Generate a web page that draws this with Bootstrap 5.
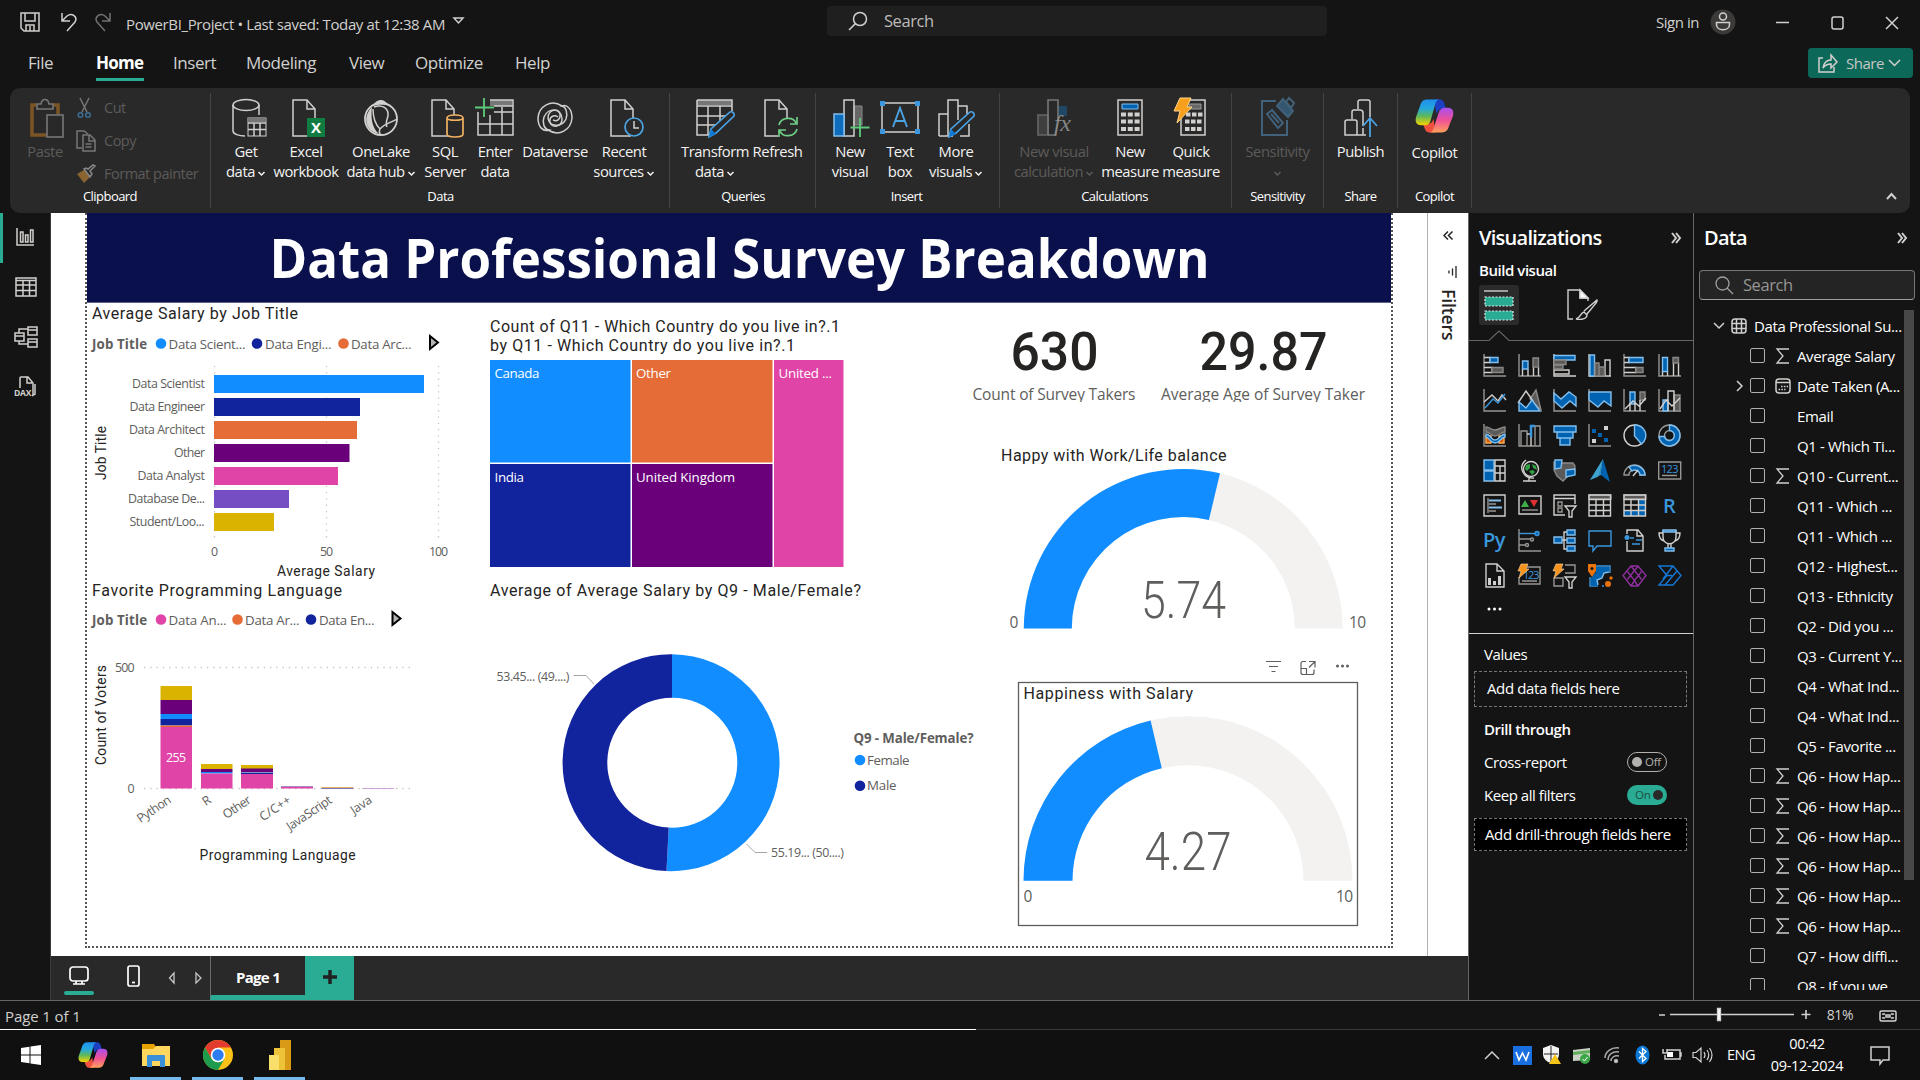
<!DOCTYPE html>
<html lang="en">
<head>
<meta charset="utf-8">
<meta name="viewport" content="width=device-width, initial-scale=1">
<title>PowerBI_Project</title>
<link href="https://cdn.jsdelivr.net/npm/bootstrap@5.3.0/dist/css/bootstrap.min.css" rel="stylesheet">
<script src="https://cdn.jsdelivr.net/npm/bootstrap@5.3.0/dist/js/bootstrap.bundle.min.js"></script>
<style>
:root{--ink:#141414;--panel:#292929;--teal:#2aac94;--ui:"Open Sans","Noto Sans",sans-serif}
body{width:1920px;height:1080px;overflow:hidden;background:var(--ink);color:#fff;font-family:var(--ui);font-size:15px;line-height:20px;letter-spacing:-.45px}
svg{display:block;flex:none;overflow:visible}
.i-line{fill:none;stroke:#d2d0ce;stroke-width:1.5}
/* title bar */
.titlebar{height:44px;color:#d2d0ce}
.tb-left{width:827px;padding-left:20px}
.tb-name{margin-left:14px;padding-top:3px;font-size:15px;letter-spacing:-.38px}
.tb-search{width:500px;height:30px;margin-top:-2px;background:#1f1f1f;border-radius:4px;padding-left:21px;font-size:16.5px;color:#bdbbb9;line-height:22px}
.tb-right{padding-right:21px;margin-top:-1px}
.tb-avatar{margin:0 27px 0 7px}
/* menu */
.menubar{height:44px;padding-left:28px;padding-right:7px;font-size:17px;color:#d2d0ce}
.menubar .tabs span{display:block;height:37px;padding-top:9px}
.menubar .tabs .on{color:#fff;font-weight:700;border-bottom:3px solid var(--teal);letter-spacing:-.75px}
.m-a{width:68px}.m-b{width:48px;margin-right:29px}.m-c{width:73px}.m-d{width:103px}.m-e{width:66px}.m-f{width:100px}
.btn-share{width:105px;height:30px;background:#0c695a;border-radius:4px;color:#c8c6c4;font-size:15px;padding:0 0 0 9px;letter-spacing:-.5px}
.btn-share:hover{background:#0c695a;color:#c8c6c4}
/* ribbon */
.ribbon{height:125px;margin:0 10px;background:var(--panel);border-radius:10px;padding:5px 0}
.rgroup{border-right:1px solid #454545;height:115px}
.rgroup .rcap{font-size:13px;letter-spacing:-.55px;height:22px;line-height:22px;text-align:center;white-space:nowrap}
.rbtn{display:flex;flex-direction:column;align-items:center;height:92px;padding-top:5px;white-space:nowrap;flex:none;color:#f3f2f1;line-height:20px;font-size:14.8px}
.rbtn svg{margin-bottom:3px}
.rbtn span{display:flex;align-items:center;gap:2px}
.rbtn.off,.rmini{color:#5d5b59}
.minis{height:92px;margin-top:-2px;margin-left:-4px}
.rmini{height:33px;gap:8px;white-space:nowrap;font-size:14.5px;letter-spacing:-.5px}
.rbtn .chev{width:9px;height:9px;margin:4px 0 0;fill:none;stroke:currentColor;stroke-width:1.5}
.g1{width:201px}.g2{width:459px;padding-left:5px}.g3{width:146px;padding-left:10px}.g4{width:184px;padding-left:8px}.g5{width:232px;padding-left:8px}.g6{width:92px}.g7{width:74px}
.g2 .rcap{padding-right:4px}.g3 .rcap{padding-right:9px}.g4 .rcap,.g5 .rcap{padding-right:10px}
.b60{width:60px}.b90{width:90px}.b38{width:38px}.b62{width:62px}.b58{width:58px}.b80{width:80px}.b70{width:70px}.b55{width:55px}.b52{width:52px}.b48{width:48px}.b64{width:64px}.b92{width:92px}
/* workspace */
.work{height:787px}
.rail{width:51px;border-right:1px solid #3b3b3b}
.rail div{height:50px;border-left:3px solid transparent;padding:0 2px 3px 0}
.rail .on{border-color:var(--teal)}
.stage{width:1417px}
.sheetwrap{height:743px;background:#fff;padding-left:34px}
.sheet{width:1308px;height:735px;border:2px dotted #555;border-top:0;color:#252423}
.banner{height:90px;background:#09104c;border-bottom:1px solid #5a5f8c}
.vcol1{width:399px}.vcol2{width:490px}.vcol3{width:415px}
.clipcard{overflow:hidden}
.filters{width:41px;border-left:1px solid #b3b0ad;color:#252423;padding-top:17px}
.filters b{writing-mode:vertical-rl;font-size:17.5px;font-weight:600;margin-top:11px;margin-left:2px;line-height:20px;letter-spacing:-.1px}
.tabbar{height:44px;background:var(--panel)}
.tb-tools{width:159px}
.tb-dev{width:55px;height:44px;padding-top:5px}
.tb-dev i{display:block;width:30px;height:4px;border-radius:2px;background:var(--teal);margin-top:6px}
.tb-phone{margin:0 28px 4px 20px}
.pagetab{width:95px;border-left:1px solid #6b6b6b;border-bottom:5px solid var(--teal);font-weight:700;font-size:15px;letter-spacing:-.7px;padding-top:3px}
.addtab{width:49px;background:var(--teal)}
/* charts */
.din{font-family:Roboto,sans-serif;fill:#252423;letter-spacing:0}
.seg{font-family:var(--ui);fill:#605e5c;letter-spacing:0}
.t16{font-size:16px}.t13{font-size:13.3px}.t12{font-size:12.4px}.t15{font-size:15.5px}.t14{font-size:13.8px}
.inv{fill:#fff}.soft{fill:#605e5c}
.grid-l{stroke:#c8c6c4;stroke-width:1.3;stroke-dasharray:1.3 5}
/* panes */
.vpane{width:226px;border-left:1px solid #666;border-right:1px solid #666}
.pane-h{font-size:20px;font-weight:600;letter-spacing:-.72px;height:50px;padding-left:10px}
.build{padding-left:10px;height:22px;line-height:15px}
.vtabs{height:55px;padding-left:10px}
.vtab{width:40px;height:40px;background:#2b2b2b;border-radius:3px}
.caret-line{margin-top:-9px}
.vgrid{display:grid;grid-template-columns:repeat(6,35px);grid-auto-rows:35px;padding:7px 0 0 8px;justify-items:center;align-items:center;height:293px;border-bottom:1px solid #d0d0d0}
.vgrid svg{width:23px;height:23px;fill:none;stroke-width:1.4}
.a{stroke:#979593}.w{stroke:#d2d0ce}.g{stroke:#8a8886;fill:#5c5a58}.b{stroke:#83beec;fill:#0063b1}.bl{stroke:#3a96dd}.bf{fill:#3a96dd;stroke:none}
.vfont{font:600 20px var(--ui);fill:#3a96dd;stroke:none}
.well{width:213px;margin-left:5px;padding-left:12px;border:1px dashed #797775;display:flex;align-items:center;letter-spacing:-.38px}
.w1{height:36px;padding-bottom:3px}.w2{height:33px;padding-left:10px;padding-bottom:2px}
.pl{padding-left:15px}
.r38{height:37px;padding-top:2px}.r45{height:44px}.r20{height:21px}.r46{height:46px}
.tog{width:40px;height:20px;border-radius:10px;font-size:11.5px;letter-spacing:-.3px;line-height:18px;margin-right:26px}
.tog i{width:10px;height:10px;border-radius:50%;display:block}
.tog-off{border:1px solid #b3b0ad;color:#b3b0ad;gap:3px}.tog-off i{background:#b3b0ad}
.tog-on{background:var(--teal);color:#1b4f46}.tog-on i{background:#292929}
.dpane{width:225px}
.dsearch{margin:7px 4px 0 5px;height:30px;border:1px solid #797775;border-bottom-color:#a19f9d;border-radius:4px;background:#242424;color:#979593;font-size:16.5px;padding-left:15px;gap:10px}
.fields{height:681px;overflow:hidden;margin-top:9px}
.frow{height:30px;white-space:nowrap;padding-top:3px;letter-spacing:-.36px}
.frow.top{padding-left:19px}
.frow.top .tbl{margin:0 7px 0 6px}
.frow .ar{width:22px;margin-left:34px}
.frow .bx{width:15px;height:15px;border:1px solid #b3b0ad;border-radius:2px;flex:none}
.frow .ic{width:32px;padding-left:10px;flex:none}
.sbar{width:10px;height:570px;background:#484848;margin:10px 5px 0 0}
/* status and taskbar */
.status{height:29px;border-top:1px solid #666;padding:2px 22px 0 5px;color:#d2d0ce}
.status .pg{letter-spacing:-.1px}
.status .pct{font-size:14px;margin:0 26px 0 15px}
.status .zoom{margin-top:-2px}
.taskbar{height:51px;background:#101010;border-top:1px solid #3a3a3a}
.taskbar .topline{position:absolute;left:0;top:1029px;width:976px;height:1px;background:#fff}
.app{width:51px;margin-right:11px;height:50px;border-bottom:3px solid transparent;padding-top:2px;display:flex;align-items:center;justify-content:center}
.app:nth-child(2){margin-left:5px}
.app:nth-child(3){margin-right:12px}
.app.run{border-color:#76b9ed}
.tray{width:30px;display:flex;justify-content:center}
.trayset{padding-right:29px}
.lang{width:48px;text-align:center;font-size:14.5px}
.clock{width:84px;font-size:14.5px;line-height:22px;text-align:center;letter-spacing:-.3px}
.bell{margin-left:20px}
</style>
</head>
<body class="d-flex flex-column">
<svg width="0" height="0" class="position-absolute">
<defs>
<linearGradient id="cp1" x1="0" y1="0" x2="0" y2="1"><stop offset="0" stop-color="#1f8fee"/><stop offset=".35" stop-color="#25a9dc"/><stop offset=".65" stop-color="#5fb85a"/><stop offset="1" stop-color="#fad400"/></linearGradient>
<linearGradient id="cp2" x1="0" y1="0" x2="0" y2="1"><stop offset="0" stop-color="#a94ff0"/><stop offset=".5" stop-color="#ee5096"/><stop offset="1" stop-color="#ffa05c"/></linearGradient>
<symbol id="copilot" viewBox="0 0 38 34">
<path d="M18 1h6c3 0 4 2 5 5l1 4h-3c-3 0-5 2-6 5z" fill="#1c3fc4"/>
<path d="M20 33h-6c-3 0-4-2-5-5l-1-3h4c3 0 5-2 6-5z" fill="#f2503f"/>
<path d="M12 1h12c-3 0-4 3-5 7l-4 14c-1 3-3 4-6 4H6c-5 0-6-4-5-8L5 7c1-4 3-6 7-6z" fill="url(#cp1)"/>
<path d="M26 33H14c3 0 4-3 5-7l4-12c1-3 3-5 6-5h3c5 0 6 4 5 8l-4 10c-1 4-3 6-7 6z" fill="url(#cp2)"/>
</symbol>
<symbol id="chevd" viewBox="0 0 9 9"><path d="M1.500 3l3 3 3-3"/></symbol>
<symbol id="mag" viewBox="0 0 20 20"><circle cx="12" cy="8" r="6.500"/><path d="M7.400 12.600L1 19"/></symbol>
<symbol id="doc" viewBox="0 0 34 40"><path d="M24 38H4V2h14l8 9v9M18 2v9h8"/></symbol>
</defs>
</svg>

<header>
<div class="titlebar d-flex align-items-center">
  <div class="tb-left d-flex align-items-center">
    <svg width="20" height="20" class="i-line"><path d="M1 1h18v18H4l-3-3zM5 1v8h10V1M6 19v-6h8v6M10 14v5"/></svg>
    <svg width="20" height="20" class="i-line ms-3 ps-1"><path d="M2 1v8h8M2 9l5-5c5-4 11 1 8 6l-8 9"/></svg>
    <svg width="20" height="20" class="i-line ms-3 opacity-50"><path d="M18 1v8h-8M18 9l-5-5C8 0 2 5 5 10l8 9"/></svg>
    <span class="tb-name">PowerBI_Project • Last saved: Today at 12:38 AM</span>
    <svg width="12" height="8" class="i-line ms-2"><path d="M1 0h9L5.500 5z"/></svg>
  </div>
  <div class="tb-search d-flex align-items-center"><svg width="20" height="20" class="i-line"><use href="#mag"/></svg><span class="ms-3">Search</span></div>
  <div class="tb-right d-flex align-items-center ms-auto">
    <span>Sign in</span>
    <svg width="26" height="26" class="tb-avatar"><circle cx="17" cy="13" r="12.500" fill="#3b3a39"/><circle cx="17" cy="7.500" r="3.500" class="i-line"/><path d="M10.500 13.500h13v2c0 7-13 7-13 0z" class="i-line"/></svg>
    <svg width="124" height="14" class="i-line ms-3"><path d="M1 7.500h13M111 2l12 12M123 2l-12 12"/><rect x="57" y="2" width="11" height="12" rx="2"/></svg>
  </div>
</div>
<div class="menubar d-flex align-items-start">
  <div class="tabs d-flex flex-grow-1"><span class="m-a">File</span><span class="m-b on">Home</span><span class="m-c">Insert</span><span class="m-d">Modeling</span><span class="m-e">View</span><span class="m-f">Optimize</span><span>Help</span></div>
  <button class="btn btn-share d-flex align-items-center mt-1"><svg width="20" height="20" class="i-line"><path d="M5 5H1v14h15v-5M5 15c1-6 4-8 8-8V2l6 7-6 6v-4c-4 0-6 1-8 4z"/></svg><span class="ms-2">Share</span><svg width="13" height="8" class="i-line ms-1"><path d="M1 1l5.500 5.500L12 1"/></svg></button>
</div>
</header>

<section class="ribbon d-flex">
  <div class="rgroup g1">
    <div class="d-flex">
      <div class="rbtn off b70"><svg width="38" height="40" viewBox="-3 0 38 40"><path d="M7 7H3v30h16M24 7h5v9" fill="none" stroke="#7c5524" stroke-width="3.500"/><path d="M8 11V6h4c1-6 7-6 8 0h4v5z" fill="none" stroke="#777" stroke-width="1.600"/><rect x="18" y="17" width="16" height="22" fill="#292929" stroke="#777" stroke-width="1.600"/></svg><span>Paste</span></div>
      <div class="minis">
        <div class="rmini d-flex align-items-center"><svg width="16" height="22" viewBox="0 0 16 22"><g fill="none" stroke="#777" stroke-width="1.500"><path d="M4 1l7 14M13 1L6 15"/><g stroke="#3f6e92"><circle cx="4.500" cy="18" r="2.300"/><circle cx="12" cy="18" r="2.300"/></g></g></svg><span class="ms-1">Cut</span></div>
        <div class="rmini d-flex align-items-center"><svg width="20" height="22" viewBox="0 0 20 22" fill="none" stroke="#777" stroke-width="1.500"><path d="M6 18H1V1h7l4 3"/><path d="M7 5h7l5 5v11H7zM13 5v6h6M9.500 14h6M9.500 17h6"/></svg><span>Copy</span></div>
        <div class="rmini d-flex align-items-center"><svg width="20" height="20" viewBox="0 0 20 20"><path d="M1 10l7-4 6 7-6 6z" fill="#8a6430"/><path d="M8 5l6 8 2-3-2-3 5-5-2-1-5 4-2-1z" fill="none" stroke="#888" stroke-width="1.500"/></svg><span>Format painter</span></div>
      </div>
    </div>
    <div class="rcap">Clipboard</div>
  </div>

  <div class="rgroup g2">
    <div class="d-flex">
      <div class="rbtn b60"><svg width="38" height="40" viewBox="0 0 38 40"><g class="i-line"><ellipse cx="19" cy="7" rx="13" ry="5.500"/><path d="M6 7v26c0 3 6 5 12 5M32 7v10"/></g><rect x="21" y="20" width="18" height="18" fill="#292929" class="w"/><path d="M21 22h18" stroke="#777" stroke-width="4"/><path d="M21 25h18M21 31.500h18M27 25v13M33 25v13" class="i-line"/></svg><span>Get</span><span>data<svg class="chev"><use href="#chevd"/></svg></span></div>
      <div class="rbtn b60"><svg width="34" height="40"><use href="#doc" class="i-line"/><rect x="18" y="20" width="18" height="19" fill="#107c41"/><text x="22" y="35" fill="#fff" font-size="15" font-weight="700">X</text></svg><span>Excel</span><span>workbook</span></div>
      <div class="rbtn b90"><svg width="36" height="40" viewBox="0 0 36 40"><circle cx="18" cy="21" r="16" fill="none" stroke="#d2d0ce" stroke-width="1.800"/><path d="M10 8c3-7 11-9 16 0-6-2-11-1-16 0zM9 9c-1 9-1 20 7 27C4 34-2 20 9 9z" fill="#d2d0ce"/><path d="M11 9c8-3 15 1 14 9-1 4-3 7-1 11M10 11c0 9 3 16 7 20 5-6 11-6 17-10M17 31c-1 2-1 4 1 6" class="i-line"/></svg><span>OneLake</span><span>data hub<svg class="chev"><use href="#chevd"/></svg></span></div>
      <div class="rbtn b38"><svg width="34" height="40"><use href="#doc" class="i-line"/><path d="M19 20v16c0 4 16 4 16 0V20c0-4-16-4-16 0 0 3 16 3 16 0" fill="#292929" stroke="#f0b060" stroke-width="1.700"/></svg><span>SQL</span><span>Server</span></div>
      <div class="rbtn b62"><svg width="38" height="40" viewBox="0 0 38 40"><path d="M14 2h22v6H14z" fill="#777"/><path d="M14 2h23v35H2V14M2 26h35M18 14h19M14 17v20M26 9v28M18 8h19" class="i-line"/><path d="M8 0v19M-1 9.500h19" stroke="#5ec97a" stroke-width="1.800"/></svg><span>Enter</span><span>data</span></div>
      <div class="rbtn b58"><svg width="38" height="40" viewBox="0 0 38 40" class="i-line"><path d="M26 8C15 1 3 8 2 20c0 9 5 14 11 12-5-1-7-7-5-13 4-10 18-9 18 2 0 8-10 10-12 3-1-5 4-8 8-5"/><path d="M12 32c11 7 23 0 24-12 0-9-5-14-10-12 4 1 6 7 4 13-4 9-17 8-18-1 0-8 10-11 12-4 1 5-3 8-7 6"/></svg><span>Dataverse</span></div>
      <div class="rbtn b80"><svg width="34" height="40"><use href="#doc" class="i-line"/><circle cx="27" cy="29" r="9" fill="#292929" stroke="#4ba3e3" stroke-width="1.700"/><path d="M27 23v7h5" class="i-line"/></svg><span>Recent</span><span>sources<svg class="chev"><use href="#chevd"/></svg></span></div>
    </div>
    <div class="rcap">Data</div>
  </div>

  <div class="rgroup g3">
    <div class="d-flex">
      <div class="rbtn b70"><svg width="40" height="40" viewBox="0 0 40 40"><path d="M2 2h35v5H2z" fill="#777"/><path d="M2 2h35v11M2 2v35h14M2 8h35M2 18h30M2 27h20M13 8v29M25 8v15" class="i-line"/><path d="M14 39l2-8 19-17c3-1 5 2 4 4L21 35z" fill="#292929" stroke="#4ba3e3" stroke-width="1.600"/><path d="M14 39l2-8 5 5z" fill="#0f78d4"/></svg><span>Transform</span><span>data<svg class="chev"><use href="#chevd"/></svg></span></div>
      <div class="rbtn b55"><svg width="34" height="40"><use href="#doc" class="i-line"/><path d="M17 20h20v20H17z" fill="#292929"/><path d="M18 27c2-8 14-9 17-2M36 19v7h-7M36 31c-2 8-14 9-17 2M18 39v-7h7" fill="none" stroke="#6fcf87" stroke-width="1.700"/></svg><span>Refresh</span></div>
    </div>
    <div class="rcap">Queries</div>
  </div>

  <div class="rgroup g4">
    <div class="d-flex">
      <div class="rbtn b52"><svg width="36" height="40" viewBox="0 0 36 40"><path d="M22 8h8v19h-8z" fill="#666" stroke="#888"/><path d="M12 2h10v36H12z" class="i-line"/><path d="M2 16h10v22H2z" fill="#0f6cbd" stroke="#83beec" stroke-width="1.500"/><path d="M28 20v19M18.500 29.500h19" stroke="#5ec97a" stroke-width="1.800"/></svg><span>New</span><span>visual</span></div>
      <div class="rbtn b48"><svg width="40" height="40" viewBox="0 0 40 40"><path d="M2 5h36v29H2z" class="i-line"/><path d="M0 3h5v5H0zM35 3h5v5h-5zM0 31h5v5H0zM35 31h5v5h-5z" fill="#3a96dd"/><path d="M13 29l7-19 7 19M15.500 23h9" fill="none" stroke="#4ba3e3" stroke-width="1.900"/></svg><span>Text</span><span>box</span></div>
      <div class="rbtn b64"><svg width="38" height="40" viewBox="0 0 38 40"><path d="M11 38V2h10v20M2 38V16h9M2 38h14M21 8h9v8M32 26v12h-9" class="i-line"/><path d="M12 39l2-8 19-17c3-1 5 2 4 4L19 35z" fill="#292929" stroke="#4ba3e3" stroke-width="1.600"/><path d="M12 39l2-8 5 5z" fill="#0f78d4"/></svg><span>More</span><span>visuals<svg class="chev"><use href="#chevd"/></svg></span></div>
    </div>
    <div class="rcap">Insert</div>
  </div>

  <div class="rgroup g5">
    <div class="d-flex">
      <div class="rbtn off b92"><svg width="34" height="40" viewBox="0 0 34 40"><path d="M22 8h8v10h-8z" fill="#1f4766"/><path d="M1 17h10v20H1z" fill="#3f3f3f" stroke="#666" stroke-width="1.600"/><path d="M11 37V2h10v22M11 37h7" fill="none" stroke="#777" stroke-width="1.600"/><text x="17" y="33" font-size="24" font-style="italic" fill="#888" font-family="Liberation Serif">fx</text></svg><span>New visual</span><span>calculation<svg class="chev"><use href="#chevd"/></svg></span></div>
      <div class="rbtn b60"><svg width="28" height="40" viewBox="0 0 28 40"><rect x="2" y="2" width="24" height="35" class="i-line"/><path d="M6 6h16v5H6z" class="b"/><path d="M5 16.500h19M5 23.500h19M5 31h19" stroke="#d2d0ce" stroke-width="4" stroke-dasharray="5 1.800"/></svg><span>New</span><span>measure</span></div>
      <div class="rbtn b62"><svg width="32" height="40" viewBox="0 0 32 40"><path d="M13 2h17v35H6V20" class="i-line"/><path d="M14 6h12v5H14z" fill="#666" stroke="#999"/><path d="M11 16.500h17M10 23.500h18M10 31h18" stroke="#d2d0ce" stroke-width="4" stroke-dasharray="4.500 1.500"/><path d="M5 0h11l-4 9h5L2 25l3-12H-1z" fill="#f7a01d" stroke="#ffd58a"/></svg><span>Quick</span><span>measure</span></div>
    </div>
    <div class="rcap">Calculations</div>
  </div>

  <div class="rgroup g6">
    <div class="rbtn off"><svg width="36" height="40" viewBox="0 0 36 40" fill="none" stroke="#42617a" stroke-width="2"><path d="M16 3H2v34h25V22"/><path d="M7 16l5-4 11 13-5 5zM11 16l8 9"/><path d="M17 8l6-7 10 12-5 6z" fill="#35566f"/><path d="M26 4l3-4 5 5-3 5z"/></svg><span>Sensitivity</span><span><svg class="chev mt-2"><use href="#chevd"/></svg></span></div>
    <div class="rcap">Sensitivity</div>
  </div>
  <div class="rgroup g7">
    <div class="rbtn"><svg width="36" height="40" viewBox="0 0 36 40"><path d="M15 11V4q0-2 2-2h8q2 0 2 2v15M9 21v-7q0-2 2-2h6q3 0 3 3v13M4 22h8q2 0 2 2v13H2V24q0-2 2-2M14 37h9M20 30v7" class="i-line"/><path d="M27 39V21M20 28l7-8 7 8" fill="none" stroke="#4ba3e3" stroke-width="1.800"/></svg><span>Publish</span></div>
    <div class="rcap">Share</div>
  </div>
  <div class="rgroup g7">
    <div class="rbtn"><svg width="39" height="36" class="mb-2"><use href="#copilot"/></svg><span>Copilot</span></div>
    <div class="rcap">Copilot</div>
  </div>
  <div class="ms-auto align-self-end me-2 pe-1"><svg width="11" height="18" class="i-line"><path d="M0 9l4.500-5L9 9" stroke-width="2"/></svg></div>
</section>

<main class="work d-flex">
  <nav class="rail">
    <div class="on d-flex align-items-center justify-content-center"><svg width="20" height="20" class="i-line"><path d="M1 1v17h17M4.500 15V5H7v10zM9.500 15V8H12v7zM14.500 15V3H17v12z"/></svg></div>
    <div class="d-flex align-items-center justify-content-center"><svg width="22" height="20" class="i-line"><path d="M1 1h20v18H1zM1 3.500h20M1 8h20M1 13.500h20M8 4v15M14.500 4v15"/></svg></div>
    <div class="d-flex align-items-center justify-content-center"><svg width="24" height="24" class="i-line"><path d="M14 2h9v8h-9zM14 5h9M14 14h9v8h-9zM14 17h9M1 8h9v8H1zM1 11h9M5 8V4h9M5 16v3h9"/></svg></div>
    <div class="d-flex align-items-center justify-content-center"><svg width="24" height="24" viewBox="0 0 24 24"><path d="M6 13V3q0-1 1-1h7l5 6v12M13 2v6h5M21 9v10l-3 2" class="i-line"/><text x="0" y="21" font-size="8.500" font-weight="700" fill="#d2d0ce" textLength="17">DAX</text></svg></div>
  </nav>

  <section class="stage">
    <div class="sheetwrap d-flex justify-content-between">
      <div class="sheet">
        <div class="banner"><svg width="1304" height="89" viewBox="87 213 1304 89"><text x="269.500" y="278" class="seg inv" font-size="53.500" font-weight="700" textLength="940" lengthAdjust="spacingAndGlyphs">Data Professional Survey Breakdown</text></svg></div>
        <div class="d-flex">
          <div class="vcol1">
            <svg width="399" height="276" viewBox="87 303 399 276">
              <text x="92" y="319" class="din t16" textLength="206">Average Salary by Job Title</text>
              <g class="seg t13">
                <text x="92" y="349" font-weight="700" textLength="55">Job Title</text>
                <text x="168.500" y="349" textLength="77">Data Scient...</text><text x="265" y="349" textLength="66.500">Data Engi...</text><text x="351" y="349" textLength="60.500">Data Arc...</text>
              </g>
              <circle cx="161" cy="343.500" r="5.300" fill="#118dff"/><circle cx="257" cy="343.500" r="5.300" fill="#12239e"/><circle cx="343.500" cy="343.500" r="5.300" fill="#e66c37"/>
              <path d="M430 336v13l8-6.500z" fill="#b3b3b3" stroke="#000" stroke-width="2"/>
              <path d="M214.500 366v176M326.500 366v176M438.500 366v176" class="grid-l"/>
              <g><path d="M214 375h210v18H214z" fill="#118dff"/><path d="M214 398h146v18H214z" fill="#12239e"/><path d="M214 421h143v18H214z" fill="#e66c37"/><path d="M214 444h135.500v18H214z" fill="#6b007b"/><path d="M214 467h124v18H214z" fill="#e044a7"/><path d="M214 490h75v18h-75z" fill="#744ec2"/><path d="M214 513h60v18h-60z" fill="#d9b300"/></g>
              <g class="seg t12">
                <text x="132" y="388" textLength="73">Data Scientist</text><text x="129.500" y="411" textLength="75.500">Data Engineer</text><text x="129" y="434" textLength="76">Data Architect</text><text x="174" y="457" textLength="31">Other</text><text x="137.500" y="480" textLength="67.500">Data Analyst</text><text x="128" y="503" textLength="77">Database De...</text><text x="129.500" y="526" textLength="75">Student/Loo...</text>
                <text x="214.500" y="556" text-anchor="middle">0</text><text x="326.500" y="556" text-anchor="middle" textLength="13">50</text><text x="438.500" y="556" text-anchor="middle" textLength="19">100</text>
              </g>
              <text x="277" y="576" class="din t14" textLength="98">Average Salary</text>
              <text transform="translate(105.500 480) rotate(-90)" class="din t14" textLength="54">Job Title</text>
            </svg>
            <svg width="399" height="300" viewBox="87 579 399 300">
              <text x="92" y="596" class="din t16" textLength="250">Favorite Programming Language</text>
              <g class="seg t13">
                <text x="92" y="625" font-weight="700" textLength="55">Job Title</text>
                <text x="168.500" y="625" textLength="58">Data An...</text><text x="245" y="625" textLength="54.500">Data Ar...</text><text x="319" y="625" textLength="55.500">Data En...</text>
              </g>
              <circle cx="161" cy="619.500" r="5.300" fill="#e044a7"/><circle cx="237.500" cy="619.500" r="5.300" fill="#e66c37"/><circle cx="311" cy="619.500" r="5.300" fill="#12239e"/>
              <path d="M392.500 612v13l8-6.500z" fill="#b3b3b3" stroke="#000" stroke-width="2"/>
              <path d="M144 667.500h267M144 788.500h267" class="grid-l"/>
              <g fill="#d9b300"><path d="M160.500 686H192v14h-31.500zM201 764h31.500v5H201zM241 765h32v4h-32z"/></g>
              <g fill="#6b007b"><path d="M160.500 700H192v14h-31.500zM201 769h31.500v3H201zM241 768.500h32v3.500h-32z"/></g>
              <g fill="#118dff"><path d="M160.500 714H192v5h-31.500zM201 772h31.500v1.500H201z"/></g>
              <g fill="#12239e"><path d="M160.500 719H192v6.500h-31.500zM241 772.500h32v1.500h-32z"/></g>
              <path d="M160.500 725.500H192v1.500h-31.500z" fill="#e66c37"/>
              <path d="M160.500 727H192v61.500h-31.500zM201 773.500h31.500v15H201zM241 774h32v14.500h-32zM281 786.500h32v2h-32z" fill="#e044a7"/>
              <path d="M281 786h32v1h-32z" fill="#a88cc8"/><path d="M321.500 787h32v1h-32z" fill="#e0b060"/><path d="M321.500 788h32v1h-32z" fill="#8078b8"/><path d="M362 788h32v1h-32z" fill="#cfa4d6"/>
              <text x="166" y="762" class="seg t12 inv" textLength="20">255</text>
              <g class="seg t12"><text x="115" y="672" textLength="19.500">500</text><text x="127.500" y="793">0</text></g>
              <g class="seg t12" text-anchor="end">
                <text transform="translate(172 802) rotate(-34)" textLength="38">Python</text><text transform="translate(212 802) rotate(-34)">R</text><text transform="translate(252 802) rotate(-34)" textLength="31">Other</text><text transform="translate(292 802) rotate(-34)" textLength="35">C/C++</text><text transform="translate(333 802) rotate(-34)" textLength="52">JavaScript</text><text transform="translate(373 802) rotate(-34)" textLength="23">Java</text>
              </g>
              <text x="199.500" y="860" class="din t14" textLength="156">Programming Language</text>
              <text transform="translate(105.500 765) rotate(-90)" class="din t14" textLength="100">Count of Voters</text>
            </svg>
          </div>
          <div class="vcol2">
            <svg width="490" height="276" viewBox="486 303 490 276">
              <g class="din t16"><text x="490" y="332" textLength="350">Count of Q11 - Which Country do you live in?.1</text><text x="490" y="351" textLength="305">by Q11 - Which Country do you live in?.1</text></g>
              <path d="M490 360h140.500v102.500H490z" fill="#118dff"/><path d="M490 464h140.500v103H490z" fill="#12239e"/><path d="M632 360h140.500v102.500H632z" fill="#e66c37"/><path d="M632 464h140.500v103H632z" fill="#6b007b"/><path d="M774 360h69.500v207H774z" fill="#e044a7"/>
              <g class="seg t13 inv"><text x="494.500" y="378" textLength="45">Canada</text><text x="636" y="378" textLength="35">Other</text><text x="778.500" y="378" textLength="53.500">United ...</text><text x="494.500" y="482" textLength="29.500">India</text><text x="636" y="482" textLength="99">United Kingdom</text></g>
            </svg>
            <svg width="490" height="300" viewBox="486 579 490 300">
              <text x="490" y="596" class="din t16" textLength="371">Average of Average Salary by Q9 - Male/Female?</text>
              <g transform="translate(.5 0)">
              <path d="M671.500 654.200a108.500 108.500 0 1 1-5.500 216.900l2.200-43.500a65 65 0 1 0 3.300-129.900z" fill="#118dff"/>
              <path d="M671.500 654.200a108.500 108.500 0 0 0-5.500 216.900l2.200-43.500a65 65 0 0 1 3.300-129.900z" fill="#12239e"/>
              </g>
              <path d="M573.500 675.500h12.500l8 8.500M746.500 844l8.500 8.500h12" fill="none" stroke="#a6a6a6"/>
              <g class="seg t12"><text x="496.500" y="681" textLength="73">53.45... (49....)</text><text x="771" y="857" textLength="73">55.19... (50....)</text></g>
              <g class="seg t13"><text x="853.500" y="743" font-weight="700" textLength="120">Q9 - Male/Female?</text><text x="867" y="765" textLength="42.500">Female</text><text x="867" y="790" textLength="29.500">Male</text></g>
              <circle cx="860" cy="760" r="5.300" fill="#118dff"/><circle cx="860" cy="785.700" r="5.300" fill="#12239e"/>
            </svg>
          </div>
          <div class="vcol3">
            <svg width="415" height="99" viewBox="976 303 415 99">
              <g class="din" font-size="54.500" font-weight="500"><text x="1010.500" y="370" textLength="88" lengthAdjust="spacingAndGlyphs">630</text><text x="1199.500" y="370" textLength="128" lengthAdjust="spacingAndGlyphs">29.87</text></g>
              <svg x="960" y="380" width="431" height="22" viewBox="960 380 431 22" class="clipcard"><g class="seg t15"><text x="972.500" y="400" textLength="163">Count of Survey Takers</text><text x="1161" y="400" textLength="204">Average Age of Survey Taker</text></g></svg>
            </svg>
            <svg width="415" height="250" viewBox="976 402 415 250">
              <text x="1001" y="461" class="din t16" textLength="225.500">Happy with Work/Life balance</text>
              <path d="M1023.800 628.500a159.500 159.500 0 0 1 319 0h-48a111.500 111.500 0 0 0-223 0z" fill="#f3f2f1"/>
              <path d="M1023.800 628.500A159.500 159.500 0 0 1 1220 473.300L1208.900 520A111.500 111.500 0 0 0 1071.800 628.500z" fill="#118dff"/>
              <text x="1141" y="618" class="din soft" font-size="52" font-weight="300" textLength="85" lengthAdjust="spacingAndGlyphs">5.74</text>
              <g class="seg t15"><text x="1009.500" y="628" textLength="9">0</text><text x="1349" y="628" textLength="17">10</text></g>
            </svg>
            <svg width="415" height="290" viewBox="976 652 415 290">
              <g fill="none" stroke="#605e5c" stroke-width="1.200"><path d="M1266 661.500h15M1269 666.500h9M1271.500 671.500h4"/><path d="M1306 661.500h-3q-2 0-2 2v9q0 2 2 2h9q2 0 2-2v-3M1309 661.500h6v6M1315 661.500l-6 6M1301 668.500h5.500v6"/></g>
              <g fill="#605e5c"><circle cx="1337.500" cy="666" r="1.500"/><circle cx="1342.500" cy="666" r="1.500"/><circle cx="1347.500" cy="666" r="1.500"/></g>
              <rect x="1018.500" y="682.500" width="339" height="243" fill="#fff" stroke="#605e5c" stroke-width="1.300"/>
              <text x="1023.500" y="698.500" class="din t16" textLength="169.500">Happiness with Salary</text>
              <path d="M1023.500 880.700a164.500 164.500 0 0 1 329 0h-49a115.500 115.500 0 0 0-231 0z" fill="#f3f2f1"/>
              <path d="M1023.500 880.700A164.500 164.500 0 0 1 1150.600 720.500L1161.800 768.200A115.500 115.500 0 0 0 1072.500 880.700z" fill="#118dff"/>
              <text x="1144.500" y="870" class="din soft" font-size="53" font-weight="300" textLength="87" lengthAdjust="spacingAndGlyphs">4.27</text>
              <g class="seg t15"><text x="1023.500" y="901.500" textLength="9">0</text><text x="1336" y="901.500" textLength="17">10</text></g>
            </svg>
          </div>
        </div>
      </div>
      <aside class="filters d-flex flex-column align-items-center">
        <svg width="10" height="12" fill="none" stroke="#252423" stroke-width="1.500"><path d="M5 1.500L1 5.500l4 4M9.500 1.500l-4 4 4 4"/></svg>
        <svg width="10" height="12" class="mt-4 ms-2" fill="none" stroke="#252423" stroke-width="1.300"><path d="M9 0v12M5.500 2.500v7M2 4.500v3"/></svg>
        <b>Filters</b>
      </aside>
    </div>
    <div class="tabbar d-flex">
      <div class="tb-tools d-flex align-items-center">
        <div class="tb-dev d-flex flex-column align-items-center justify-content-center"><svg width="20" height="19" fill="none" stroke="#fff" stroke-width="1.700"><rect x="1" y="1" width="18" height="14" rx="3"/><path d="M7 15v3M13 15v3M4 18h12"/></svg><i></i></div>
        <svg width="14" height="23" class="tb-phone" viewBox="-2 0 14 23" fill="none" stroke="#fff" stroke-width="1.700"><rect x="0" y="1" width="11" height="20" rx="2"/><path d="M4 17.500h3"/></svg>
        <svg width="34" height="12" fill="none" stroke="#c8c6c4" stroke-width="1.300"><path d="M6 1v10L1.500 6zM28 1v10l5-5z"/></svg>
      </div>
      <div class="pagetab d-flex align-items-center justify-content-center">Page 1</div>
      <div class="addtab d-flex align-items-center justify-content-center"><svg width="14" height="16" stroke="#222" stroke-width="3.500"><path d="M7 0v14M0 7h14"/></svg></div>
    </div>
  </section>

  <aside class="vpane">
    <div class="pane-h d-flex align-items-center justify-content-between pe-2"><span>Visualizations</span><svg width="10" height="12" class="i-line me-1"><path d="M1 1l4 5-4 5M5 1l4 5-4 5" stroke-width="2"/></svg></div>
    <div class="build fw-semibold">Build visual</div>
    <div class="vtabs d-flex align-items-start">
      <div class="vtab d-flex align-items-center justify-content-center"><svg width="30" height="30"><path d="M0 1h24" stroke="#c8c6c4" stroke-width="1.500"/><g fill="#2aac94" stroke="#e8e8e8" stroke-dasharray="2 1.500" stroke-width="1.200"><path d="M1 7h28v9H1zM1 21h28v9H1z"/></g></svg></div>
      <svg width="32" height="32" class="ms-5 mt-1" fill="none" stroke="#d2d0ce" stroke-width="1.400"><path d="M6 30H1V1h12l8 8v3M13 1v8h8"/><path d="M13 1v8h8z" fill="#fff"/><path d="M9 30c5-1 4-6 8-7l3 3c0 4-6 5-11 4zM17 22L30 11c1 1 0 2-10 14"/></svg>
    </div>
    <svg width="224" height="10" fill="none" stroke="#666" stroke-width="1.200" class="caret-line"><path d="M0 9.500h20l10-9.500 10 9.500h184"/></svg>
    <div class="vgrid">
      <svg><path class="a" d="M1 0v22h22"/><path class="w" d="M1 3.500h6v5H1M1 13.500h8v5H1"/><path class="b" d="M7 3.500h8v5H7z"/><path class="g" d="M9 13.500h11v5H9z"/></svg>
      <svg><path class="a" d="M1 0v22h22"/><path class="w" d="M4.500 15v7M10 15v7M15.500 13v9M20.500 13v9"/><path class="b" d="M4.500 7h5.500v8H4.500z"/><path class="g" d="M15 4h5.500v9H15z"/></svg>
      <svg><path class="w" d="M1 0v22h22M1 16h15v4H1"/><path class="b" d="M1 1.500h21v4.500H1z"/><path class="g" d="M1 6h12v4.500H1zM1 11h9v4H1z"/></svg>
      <svg><path class="w" d="M1 0v22h22M17 22V6h5v16"/><path class="b" d="M2 1h4.500v21H2z"/><path class="g" d="M7 9h4v13H7zM11 13h5.500v9H11z"/></svg>
      <svg><path class="a" d="M1 0v22h22"/><path class="w" d="M1 3.500h5v5H1M1 13.500h12v5H1"/><path class="b" d="M6 3.500h14v5H6z"/><path class="g" d="M13 13.500h7v5h-7z"/></svg>
      <svg><path class="a" d="M1 0v22h22"/><path class="w" d="M4.500 17v5M9.500 17v5M15.500 9v13M20.500 9v13"/><path class="b" d="M4.500 3.500h5v14h-5z"/><path class="g" d="M15 3.500h5.500V9H15z"/></svg>

      <svg><path class="a" d="M1 0v22h22"/><path class="w" d="M1 13l8-7 6 6 4-6 4 5"/><path class="bl" d="M2 19l8-9 5 4 7-9"/></svg>
      <svg><path class="g" d="M12 10l6-9 5 20z"/><path class="w" d="M0 14L8 2l7 10"/><path class="b" d="M1 13l7 6 6-8 8 11H1z"/></svg>
      <svg><path class="a" d="M1 0v22h22"/><path class="b" d="M1 4l7 6 8-7 7 5v9l-6-5-8 7-8-7z"/></svg>
      <svg><path class="a" d="M1 0v22h22"/><path class="b" d="M1 3h22v14l-7-5-6 6-9-7z"/></svg>
      <svg><path class="a" d="M1 0v22h22"/><path class="b" d="M7 3h5v12H7z"/><path class="g" d="M17 3h5v8h-5z"/><path class="w" d="M7 14v8M12 14v8M17 11v11M2 20l8-8 6 5 7-8"/></svg>
      <svg><path class="a" d="M1 0v22h22"/><path class="b" d="M5 11h5v11H5z"/><path class="g" d="M16 6h6v16h-6z"/><path class="w" d="M10 22V2h6v20M2 20l6-9 6 6 8-8"/></svg>

      <svg><path class="a" d="M1 0v22h22"/><path d="M3 12h5v7H3zM16 12h5v7h-5z" fill="#d85a00" stroke="#ffb058"/><path class="g" d="M3 3c4 0 5 3 9 3s6-3 10-3v5c-4 0-6 4-10 4s-5-4-9-4z"/><path class="b" d="M3 10c4 0 5 6 9 6s6-6 10-6v3c-4 0-5 6-10 6s-6-6-9-6z"/></svg>
      <svg><path class="a" d="M1 0v22h22M3 22V7h6v15M17 22V2h5v20"/><path class="w" d="M9 10h4v12"/><path class="bl" stroke-width="2.500" d="M13 13V2h4"/></svg>
      <svg><path class="b" d="M1 2h22v6H1zM4 8h16v6H4zM7 14h10v7H7z"/></svg>
      <svg><path class="a" d="M1 0v22h22"/><path fill="#d2d0ce" d="M16 2h4v4h-4zM4 15h4v4H4z"/><path fill="#0063b1" d="M4 5h4v4H4zM10 9h4v4h-4zM16 14h4v4h-4z"/></svg>
      <svg><circle class="w" cx="11.500" cy="11.500" r="10.500"/><path class="b" d="M11.500 1v11l7 8A10.500 10.500 0 0 0 11.500 1z"/></svg>
      <svg><circle class="a" cx="11.500" cy="11.500" r="10.500"/><circle class="a" cx="11.500" cy="11.500" r="5"/><path class="b" d="M11.500 1A10.500 10.500 0 1 1 1 12.500h5.500a5 5 0 1 0 5-6z"/></svg>

      <svg><path class="b" d="M1 1h10v10H1zM1 12h10v10H1z"/><path class="w" d="M12 1h10v21H12zM12 7h10M17 7v7h5M12 14h5v8"/></svg>
      <svg><circle cx="13" cy="10" r="7.500" class="w"/><path fill="#2f9e44" d="M8 6l4-1v4l-3 3-2-2zM14 5l4 2 1 4-4-2zM11 12l4-1 2 2-3 3z"/><path class="w" d="M8 1C-1 8 6 20 16 19M11 19v3M5 22h13"/></svg>
      <svg><path class="g" d="M1 3l5 1h14l2 3-1 8-6 2-5 5-6-5-3-6z"/><path class="b" d="M2 1h7l-1 8-6 1zM13 11l9-1v6l-9 2z"/></svg>
      <svg><path fill="#2a8fc4" d="M15 0L2 21l11-5z"/><path fill="#0063b1" d="M15 0l7 23-9-7z"/><path fill="#53b8dc" d="M15 0L2 21l8-3z" opacity=".5"/></svg>
      <svg><path class="a" d="M1 16a10.500 10 0 0 1 21 0h-5a5.500 5.500 0 0 0-11 0z"/><path class="b" d="M6 8a10.500 10 0 0 1 16 8h-5a5 5 0 0 0-8-4z"/><path class="w" d="M10 17l5-6"/></svg>
      <svg><path class="a" d="M.700 3h22v17H.700zM4 16.500h15"/><text x="3" y="14" font-size="11" class="bf" textLength="17">123</text></svg>

      <svg><path class="w" d="M1 1h21v21H1z"/><path class="a" d="M5 4v15M6 10h7M6 17h7"/><path stroke="#83beec" stroke-width="2" d="M6 6.500h12M6 13.500h13"/></svg>
      <svg><path class="w" d="M1 2h22v18H1z"/><path class="a" d="M4 16h16"/><path fill="#3fae49" d="M7 6l4 7H3z"/><path fill="#e03131" d="M12 6h8l-4 7z"/></svg>
      <svg><path class="w" d="M12 21H1V1h21v9M1 4.500h21"/><path class="a" d="M5 8h4v4H5zM5 14h4v4H5z"/><path class="w" fill="#141414" d="M12 12h11l-4 5v6h-3v-6z"/></svg>
      <svg><path class="g" d="M1 1h22v4H1z"/><path class="w" d="M1 1h21.500v21H1zM1 5.500h22M1 11h22M1 16.500h22M8 5v17M15.500 5v17"/></svg>
      <svg><path fill="#0063b1" d="M15 5h8v17H1v-6h14z"/><path class="g" d="M1 1h22v4H1z"/><path class="w" d="M1 1h21.500v21H1zM1 5.500h22M1 11h22M1 16.500h22M8 5v17M15.500 5v17"/></svg>
      <svg><text x="5" y="19" class="vfont">R</text></svg>

      <svg><text x="0" y="17.500" class="vfont" textLength="22">Py</text></svg>
      <svg><path class="a" d="M1 0v22h22M1 10h12M1 16h7"/><path class="bl" d="M1 4.500h16"/><circle class="bl" cx="19" cy="4.500" r="2" fill="#0063b1"/><circle class="a" cx="14" cy="10.500" r="1.500"/><circle class="a" cx="9" cy="16" r="1.500"/></svg>
      <svg><path class="w" d="M8 11h6M14 3h-3v17h3"/><path class="b" d="M1 8h8v6H1zM14 1h8v5h-8zM14 9h8v5h-8zM14 17h8v5h-8z"/></svg>
      <svg><path class="bl" d="M1 2h22v15H9l-4 5v-5H1z"/></svg>
      <svg><path class="w" d="M4 5V1h11l5 6v15H4V12M14 1v6h6"/><path class="bl" d="M7 9h4M13 11h6M9 15h8"/><circle class="bf" cx="4" cy="8.500" r="2.500"/></svg>
      <svg><path class="w" d="M5 2h13v6c0 9-13 9-13 0zM5 4H1c0 5 2 7 5 8M18 4h4c0 5-2 7-5 8M10 15v4M13 15v4"/><path class="b" d="M5 1h13v2H5zM7 19h9v3H7z"/></svg>

      <svg><path class="w" d="M3 0h11l7 7v16H3zM14 0v7h7"/><path fill="#d2d0ce" d="M5 14h3v7H5zM10 17h3v4h-3zM15 12h3v9h-3z"/></svg>
      <svg><path class="a" d="M9 3h13v17H1v-7M4 17h15"/><text x="5" y="15" font-size="11" class="bf" textLength="16">123</text><path fill="#f7941d" stroke="#ffd9a0" stroke-width=".6" d="M3 0h7L8 5h3L1 14l2-7H0z"/></svg>
      <svg><path class="a" d="M12 1h10v8H12M1 14v8h9v-8z"/><path class="w" fill="#141414" d="M12 13h11l-4 5v6h-3v-6z"/><path fill="#f7941d" stroke="#ffd9a0" stroke-width=".6" d="M3 0h7L8 5h3L1 14l2-7H0z"/></svg>
      <svg><path class="bl" d="M8 2h14v7M2 13v9h8M14 22h2"/><path fill="#0063b1" d="M8 3h13v5l-5 1-2 5-5 2 1 6H3v-8l5-6z"/><path stroke="#83beec" d="M21 8l-5 1-2 5-5 2 1 5"/><path fill="#e8720c" d="M0 0h8v7l-4 6-4-6z"/><circle cx="4" cy="4.500" r="1.500" fill="#141414"/><circle cx="20" cy="20" r="3" fill="#e8720c"/><circle cx="23" cy="14" r="1.700" fill="#e8720c"/></svg>
      <svg stroke="#8e2f9e"><path d="M8 2h7l8 9.500L15 22H8L0 11.500zM11.500 6.500l3.500-4M11.500 6.500L8 2M11.500 6.500l4 5-4 5-4-5zM11.500 16.500L8 22M11.500 16.500L15 22M7.500 11.500L11 7M15.500 11.500l3-4M15.500 11.500l3 4M7.500 11.500l-3-4M7.500 11.500l-3 4"/></svg>
      <svg stroke="#1577d4"><path d="M1 2h14l8 9.500L15 21H1l8-9.500zM15 2L5 15M19 7L7 21M9 11.500h5"/></svg>
      <svg><g fill="#fff"><circle cx="6" cy="10" r="1.500"/><circle cx="11.500" cy="10" r="1.500"/><circle cx="17" cy="10" r="1.500"/></g></svg>
    </div>
    <div class="pl r38 d-flex align-items-center">Values</div>
    <div class="well w1">Add data fields here</div>
    <div class="pl r45 d-flex align-items-center fw-semibold">Drill through</div>
    <div class="pl r20 d-flex align-items-center justify-content-between"><span>Cross-report</span><div class="tog tog-off d-flex align-items-center ps-1"><i></i>Off</div></div>
    <div class="pl r46 d-flex align-items-center justify-content-between"><span>Keep all filters</span><div class="tog tog-on d-flex align-items-center justify-content-between px-1"><span class="ps-1">On</span><i></i></div></div>
    <div class="well w2 bg-black">Add drill-through fields here</div>
  </aside>

  <aside class="dpane">
    <div class="pane-h d-flex align-items-center justify-content-between pe-2"><span>Data</span><svg width="10" height="12" class="i-line me-1"><path d="M1 1l4 5-4 5M5 1l4 5-4 5" stroke-width="2"/></svg></div>
    <div class="dsearch d-flex align-items-center"><svg width="18" height="18" fill="none" stroke="#a19f9d" stroke-width="1.300"><circle cx="7.500" cy="7.500" r="6.500"/><path d="M12 12l6 6"/></svg>Search</div>
    <div class="d-flex justify-content-between">
      <div class="fields" id="fields"></div>
      <div class="sbar"></div>
    </div>
  </aside>
</main>

<div class="status d-flex align-items-center">
  <span class="pg flex-grow-1">Page 1 of 1</span>
  <svg width="154" height="16" class="zoom" fill="none" stroke="#d2d0ce" stroke-width="1.300"><path d="M1 8h6M12 7.500h124"/><path d="M59.500 1.500h3v12h-3z" fill="#fff"/><path d="M143.500 7.500h9M148 3v9" stroke-width="1.600"/></svg>
  <span class="pct zoom">81%</span>
  <svg width="19" height="12" class="i-line" stroke-width="1.300"><rect x="1" y="1" width="16" height="10" rx="1.500"/><path d="M4 5V4h2M12 4h2v1M14 7v1h-2M6 8H4V7M7 5h4v2H7z"/></svg>
</div>

<footer class="taskbar d-flex align-items-center">
  <div class="topline"></div>
  <div class="app"><svg width="20" height="20" fill="#fff"><path d="M0 3l8.500-1.200v7.700H0zM9.500 1.600L20 0v9.500H9.500zM0 10.500h8.500v7.700L0 17zM9.500 10.500H20V20L9.500 18.400z"/></svg></div>
  <div class="app"><svg width="30" height="28"><use href="#copilot"/></svg></div>
  <div class="app run"><svg width="28" height="24"><path d="M0 1h12l2 3h14v5H0z" fill="#e8a200"/><path d="M0 6h11l3-3h14v20H0z" fill="#ffd75e"/><path d="M5 13q0-1 1-1h16q1 0 1 1v11h-5v-6h-8v6H5z" fill="#3a8fd8"/></svg></div>
  <div class="app run"><svg width="30" height="30" viewBox="0 0 30 30"><circle cx="15" cy="15" r="15" fill="#fbc116"/><path d="M2 7.500A15 15 0 0 1 28 7.500H15L8.500 18.700z" fill="#e33b2e"/><path d="M2 7.500A15 15 0 0 0 15 30l6.500-11.200L15 22.500 8.500 18.700z" fill="#1e9b4c"/><circle cx="15" cy="15" r="7.300" fill="#fff"/><circle cx="15" cy="15" r="5.700" fill="#2d7cf0"/></svg></div>
  <div class="app run"><svg width="24" height="30" viewBox="0 0 24 30"><path d="M12 0h11v30H12z" fill="#d99b16"/><path d="M6 8h11v22H6z" fill="#eec33a"/><path d="M1 15h10v15H1z" fill="#f8df6c"/></svg></div>
  <div class="trayset d-flex align-items-center ms-auto">
    <div class="tray"><svg width="16" height="10" class="i-line"><path d="M1 9l7-7 7 7"/></svg></div>
    <div class="tray"><svg width="19" height="19"><path d="M0 0h19v19H0z" fill="#1a6fe0"/><path d="M3 6l3 8 3.500-7L13 14l3-8" fill="none" stroke="#fff" stroke-width="1.600"/></svg></div>
    <div class="tray"><svg width="18" height="20"><path d="M8 0l8 3v6c0 5-4 8-8 9-4-1-8-4-8-9V3z" fill="#f3f3f3"/><path d="M8 1v8h7M8 9v8M1 9h7" stroke="#222" fill="none"/><path d="M12 9l6 10H6z" fill="#f5c518"/></svg></div>
    <div class="tray"><svg width="22" height="18"><path d="M2 4l17-2v12L2 15z" fill="#c9d2c4"/><path d="M2 6l17-2v3L2 9z" fill="#5fae5b"/><circle cx="14" cy="13" r="5" fill="#3aa648"/><path d="M11.500 13l2 2 3-4" stroke="#fff" fill="none"/></svg></div>
    <div class="tray"><svg width="18" height="18" fill="none" stroke="#a9a9a9" stroke-width="1.500"><path d="M2 12C2 6 8 1 16 2M5 14c0-5 4-9 11-8M8 15c0-3 3-6 8-5"/><circle cx="13" cy="15" r="1.500" fill="#fff"/></svg></div>
    <div class="tray"><svg width="15" height="20"><ellipse cx="7.500" cy="10" rx="7" ry="9.500" fill="#0a78d7"/><path d="M4 6.500l7 7-3.500 3V3.500l3.500 3-7 7" fill="none" stroke="#fff" stroke-width="1.300"/></svg></div>
    <div class="tray"><svg width="20" height="14"><path d="M5 2h13v9H3V7M18 5h1v3h-1" class="i-line"/><path d="M5 4h6v5H5z" fill="#fff"/><path d="M1 1v4h4V1" class="i-line"/></svg></div>
    <div class="tray"><svg width="20" height="16" class="i-line"><path d="M1 5.500h3L9 1v14l-5-4.500H1zM12 5q2 3 0 6M15 3q3.500 5 0 10M17.500 1q5 7 0 14" stroke-width="1.200"/></svg></div>
    <span class="lang">ENG</span>
    <div class="clock">00:42<br>09-12-2024</div>
    <svg width="22" height="20" class="i-line bell"><path d="M2 2h18v13h-6l-3 4v-4H2z"/></svg>
  </div>
</footer>
<script>
const fields=[["s","Average Salary"],["d","Date Taken (A..."],["","Email"],["","Q1 - Which Ti..."],["s","Q10 - Current..."],["","Q11 - Which ..."],["","Q11 - Which ..."],["","Q12 - Highest..."],["","Q13 - Ethnicity"],["","Q2 - Did you ..."],["","Q3 - Current Y..."],["","Q4 - What Ind..."],["","Q4 - What Ind..."],["","Q5 - Favorite ..."],["s","Q6 - How Hap..."],["s","Q6 - How Hap..."],["s","Q6 - How Hap..."],["s","Q6 - How Hap..."],["s","Q6 - How Hap..."],["s","Q6 - How Hap..."],["","Q7 - How diffi..."],["","Q8 - If you we..."]];
const sigma='<svg width="14" height="16" class="i-line"><path d="M14 1H2l6 7-6 7h12" stroke-width="1.300"/></svg>';
const cal='<svg width="16" height="16" class="i-line"><rect x="1" y="1" width="14" height="14" rx="3"/><path d="M1 4.500h14"/><path d="M6 8.500h7M3.500 11.500h7" stroke-dasharray="1.600 1.200"/></svg>';
document.getElementById("fields").innerHTML=
 '<div class="frow top d-flex align-items-center"><svg width="12" height="8" class="i-line"><path d="M1 1l5 5 5-5"/></svg><svg width="16" height="16" class="i-line tbl"><rect x="1" y="1" width="14" height="14" rx="3"/><path d="M1 5.500h14M1 10.500h14M5.500 1v14M10.500 1v14"/></svg>Data Professional Su...</div>'+
 fields.map(([t,n])=>`<div class="frow d-flex align-items-center"><span class="ar">${t=="d"?'<svg width="8" height="12" class="i-line ms-1 ps-1"><path d="M1 1l5 5-5 5"/></svg>':''}</span><span class="bx"></span><span class="ic">${t=="s"?sigma:t=="d"?cal:""}</span>${n}</div>`).join("");
</script>
</body>
</html>
